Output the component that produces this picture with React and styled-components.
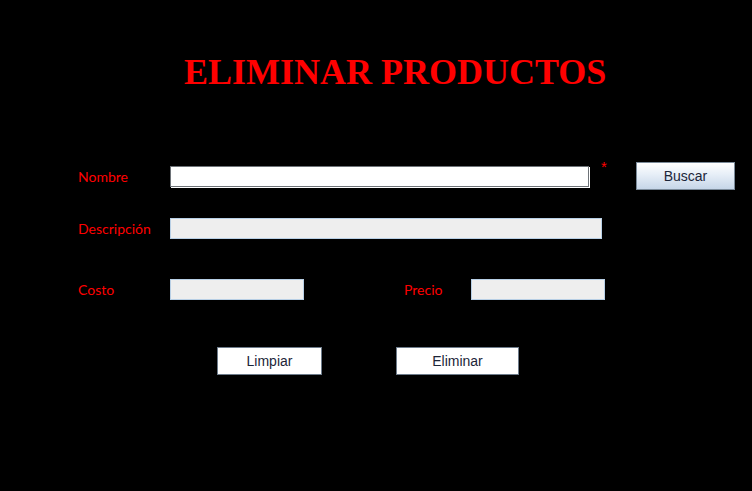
import React from 'react';
import styled, { createGlobalStyle } from 'styled-components';

const GlobalStyle = createGlobalStyle`
  html, body {
    margin: 0;
    padding: 0;
    background: #000;
  }
`;

const Screen = styled.div`
  width: 752px;
  height: 491px;
  background: #000;
  box-sizing: border-box;
  padding-top: 54px;
  overflow: hidden;
`;

const Title = styled.h1`
  margin: 0 0 0 184px;
  font-family: "Liberation Serif", "Times New Roman", serif;
  font-weight: bold;
  font-size: 36px;
  line-height: 36px;
  color: #ff0000;
  white-space: nowrap;
`;

const Form = styled.div`
  display: flex;
  flex-direction: column;
  padding-left: 78px;
  margin-top: ${p => p.$top}px;
`;

const Row = styled.div`
  display: flex;
  align-items: center;
  height: ${p => p.$height}px;
  margin-top: ${p => p.$gap || 0}px;
`;

const Label = styled.span`
  width: ${p => p.$width}px;
  margin-left: ${p => p.$left || 0}px;
  flex-shrink: 0;
  font-family: Lato, "DejaVu Sans", sans-serif;
  font-size: 14px;
  color: #ff0000;
`;

const Field = styled.div`
  width: ${p => p.$width}px;
  height: 21px;
  box-sizing: border-box;
  flex-shrink: 0;
  background: ${p => (p.$editable ? '#ffffff' : '#eeeeee')};
  border: 1px solid ${p => (p.$editable ? '#6e7378' : '#b8cfe5')};
  box-shadow: ${p => (p.$editable ? 'inset -1px -1px 0 #ffffff, 1px 1px 0 #ffffff' : 'none')};
`;

const Star = styled.span`
  align-self: flex-start;
  margin: -3px 0 0 12px;
  width: 35px;
  font-family: "Liberation Sans", Arial, sans-serif;
  font-size: 15px;
  line-height: 15px;
  color: #ff0000;
`;

const Button = styled.button`
  width: ${p => p.$width}px;
  height: 28px;
  margin-left: ${p => p.$left || 0}px;
  box-sizing: border-box;
  padding: 0;
  flex-shrink: 0;
  font-family: "Liberation Sans", Arial, sans-serif;
  font-size: 14px;
  color: #1c2538;
  border: 1px solid ${p => (p.$metal ? '#7a8a99' : '#6d7b8a')};
  background: ${p =>
    p.$metal ? 'linear-gradient(#ffffff 0%, #e6eef7 45%, #c6d6e8 100%)' : '#ffffff'};
  cursor: pointer;
`;

export default function App() {
  return (
    <>
      <GlobalStyle />
      <Screen>
        <Title>ELIMINAR PRODUCTOS</Title>
        <Form $top={72}>
          <Row $height={28}>
            <Label $width={92}>Nombre</Label>
            <Field $width={419} $editable />
            <Star>*</Star>
            <Button $width={99} $metal>Buscar</Button>
          </Row>
          <Row $height={21} $gap={28}>
            <Label $width={92}>Descripción</Label>
            <Field $width={432} />
          </Row>
          <Row $height={21} $gap={40}>
            <Label $width={92}>Costo</Label>
            <Field $width={134} />
            <Label $width={67} $left={100}>Precio</Label>
            <Field $width={134} />
          </Row>
          <Row $height={28} $gap={47}>
            <Button $width={105} $left={139}>Limpiar</Button>
            <Button $width={123} $left={74}>Eliminar</Button>
          </Row>
        </Form>
      </Screen>
    </>
  );
}
